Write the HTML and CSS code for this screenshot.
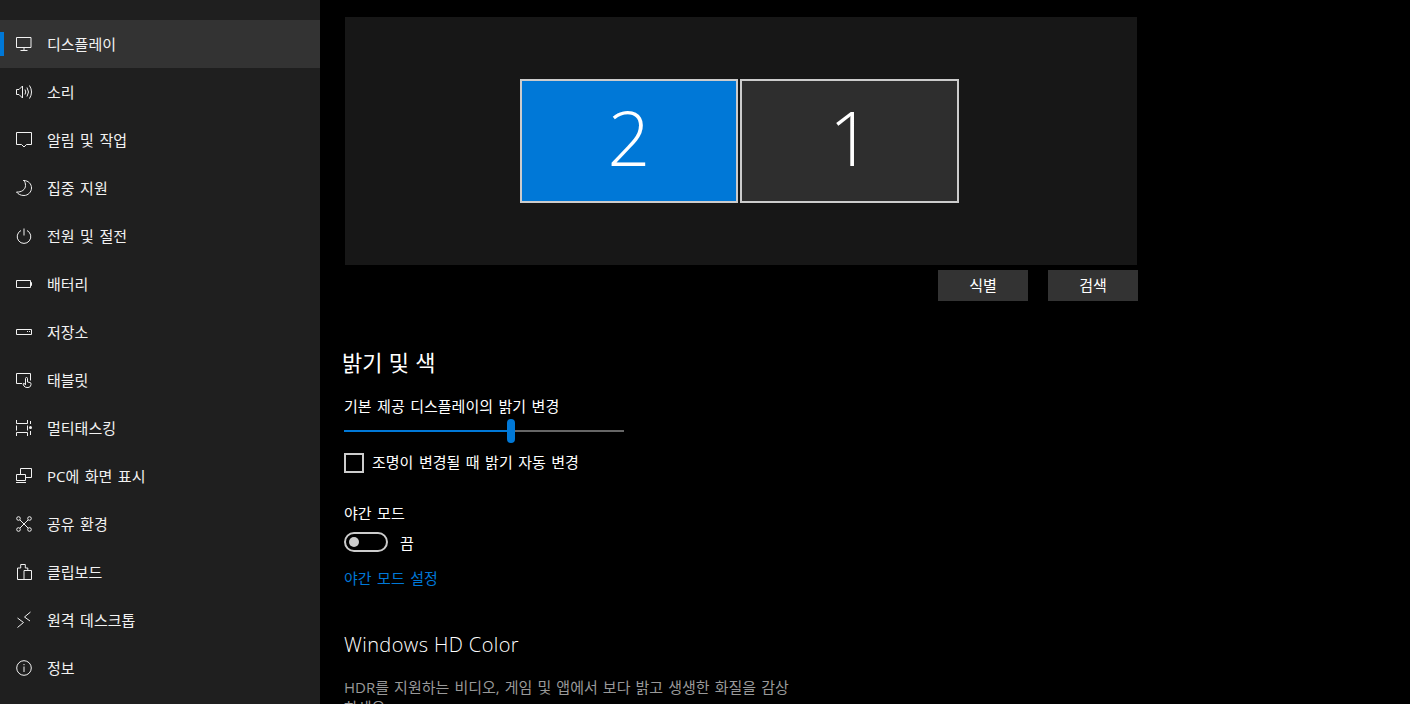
FILE: index.html
```html
<!DOCTYPE html>
<html lang="ko">
<head>
  <meta charset="UTF-8" />
  <title>디스플레이 설정</title>
  <link rel="stylesheet" href="styles.css">
</head>
<body>
  <nav class="sidebar">
    <a class="nav-item active">
      <svg class="nav-icon" viewBox="0 0 16 16"><path d="M.5 1.500h14.500v10H.5zM8 11.500v3M4.500 14.500h7"/></svg>
      <span>디스플레이</span>
    </a>
    <a class="nav-item">
      <svg class="nav-icon" viewBox="0 0 16 16"><path d="M.5 5.500h2.500L6.500 2v12L3 10.500H.5zM9 5.500q1.500 2.500 0 5M11 3.500q3 4.500 0 9M13.500 1.500q4 6.500 0 13"/></svg>
      <span>소리</span>
    </a>
    <a class="nav-item">
      <svg class="nav-icon" viewBox="0 0 16 16"><path d="M.5.500h15v12h-5L8 15l-2.500-2.500h-5z"/></svg>
      <span>알림 및 작업</span>
    </a>
    <a class="nav-item">
      <svg class="nav-icon" viewBox="0 0 16 16"><path d="M7.500.500C12.500.5 15.500 4 15.500 8c0 4-3.500 7.500-7.500 7.500-3.500 0-6-1.500-7.500-3.500 5 .5 9-2.500 9-6.500 0-2-.5-4-2-5.500z"/></svg>
      <span>집중 지원</span>
    </a>
    <a class="nav-item">
      <svg class="nav-icon" viewBox="0 0 16 16"><path d="M8 .5v7M5 2.500a6.800 6.800 0 1 0 6 0"/></svg>
      <span>전원 및 절전</span>
    </a>
    <a class="nav-item">
      <svg class="nav-icon" viewBox="0 0 16 16"><path d="M.5 4.500h14v7H.5zM14.500 6.500h1v3h-1"/></svg>
      <span>배터리</span>
    </a>
    <a class="nav-item">
      <svg class="nav-icon" viewBox="0 0 16 16"><path d="M.5 5.500h15v5H.5zM11 7.500h1M13 7.500h1"/></svg>
      <span>저장소</span>
    </a>
    <a class="nav-item">
      <svg class="nav-icon" viewBox="0 0 16 16"><path d="M6 11.500H.5v-10h14v7M9.500 13V6.500a1 1 0 0 1 2 0V10l2.500.5q1.500.5 1 2l-.5 1.500q-.5 1.500-2.500 1.500h-1q-2 0-3-1.500l-1-2q0-1 1.500-.5z"/></svg>
      <span>태블릿</span>
    </a>
    <a class="nav-item">
      <svg class="nav-icon" viewBox="0 0 16 16"><path d="M.5 0v3.500h11V0M.5 16v-3.500h11V16M.5 5.500v5M11.500 5.500v5M14.500 1v3M14.500 11v4"/><circle class="dot" cx="14.500" cy="7.500" r="1.500"/></svg>
      <span>멀티태스킹</span>
    </a>
    <a class="nav-item">
      <svg class="nav-icon" viewBox="0 0 16 16"><path d="M4.500 6V.5h11v9H10M.5 6.500h9v6h-9zM0 14.500h10"/></svg>
      <span>PC에 화면 표시</span>
    </a>
    <a class="nav-item">
      <svg class="nav-icon" viewBox="0 0 16 16"><circle cx="2.500" cy="2.500" r="1.800"/><circle cx="13.500" cy="2.500" r="1.800"/><circle cx="2.500" cy="13.500" r="1.800"/><circle cx="13.500" cy="13.500" r="1.800"/><path d="M4 4l8 8M12 4l-8 8"/></svg>
      <span>공유 환경</span>
    </a>
    <a class="nav-item">
      <svg class="nav-icon" viewBox="0 0 16 16"><path d="M8 15.500H1.500V4h3.200V.5h4.600V4h2.500v2.500M8 6.500h7.500v9H8z"/></svg>
      <span>클립보드</span>
    </a>
    <a class="nav-item">
      <svg class="nav-icon" viewBox="0 0 16 16"><path d="M1.500 6l6 4.500-6 5M14.500 0L8.500 5l5.500 4"/></svg>
      <span>원격 데스크톱</span>
    </a>
    <a class="nav-item">
      <svg class="nav-icon" viewBox="0 0 16 16"><circle cx="8" cy="8" r="7.300"/><path d="M8 6.500V12M8 4v1.200"/></svg>
      <span>정보</span>
    </a>
  </nav>

  <main class="content">
    <div class="arrange">
      <div class="monitor selected">2</div>
      <div class="monitor">1</div>
    </div>
    <div class="arrange-buttons">
      <button>식별</button>
      <button>검색</button>
    </div>

    <h2 class="section-title first">밝기 및 색</h2>
    <div class="field-label">기본 제공 디스플레이의 밝기 변경</div>
    <div class="slider">
      <div class="slider-fill"></div>
      <div class="slider-thumb"></div>
    </div>
    <label class="check-row">
      <span class="checkbox"></span>
      <span class="check-text">조명이 변경될 때 밝기 자동 변경</span>
    </label>

    <div class="night-label">야간 모드</div>
    <div class="toggle-row">
      <span class="toggle"><span class="toggle-knob"></span></span>
      <span>끔</span>
    </div>
    <a class="link">야간 모드 설정</a>

    <h2 class="section-title hd">Windows HD Color</h2>
    <p class="description">HDR를 지원하는 비디오, 게임 및 앱에서 보다 밝고 생생한 화질을 감상하세요.</p>
  </main>
</body>
</html>
```

FILE: styles.css
```css
* {
  box-sizing: border-box;
}

html, body {
  height: 704px;
  overflow: hidden;
}

body {
  margin: 0;
  background-color: #000;
  color: #fff;
  font-family: "Open Sans", "Noto Sans CJK KR", sans-serif;
  font-size: 15px;
  word-spacing: 1.6px;
  display: flex;
}

.sidebar {
  width: 320px;
  flex-shrink: 0;
  height: 704px;
  padding-top: 20px;
  background-color: #1f1f1f;
}

.nav-item {
  display: flex;
  align-items: center;
  height: 48px;
  padding-left: 16px;
  color: #f2f2f2;
  position: relative;
}

.nav-item span {
  margin-left: 15px;
  margin-top: -2px;
}

.nav-item.active {
  background-color: #333;
}

.nav-item.active::before {
  content: "";
  position: absolute;
  left: 0;
  top: 12px;
  width: 4px;
  height: 24px;
  background-color: #0078d7;
}

.nav-icon {
  width: 16px;
  height: 16px;
  fill: none;
  stroke: #f2f2f2;
  stroke-width: 1;
  overflow: visible;
}

.nav-icon .dot {
  fill: #f2f2f2;
  stroke: none;
}

.content {
  flex: 1;
  padding: 17px 0 0 24px;
}

.arrange {
  width: 792px;
  height: 248px;
  margin-left: 1px;
  padding: 62px 0 0 175px;
  background-color: #171717;
  display: flex;
  gap: 2px;
  align-items: flex-start;
}

.monitor {
  width: 219px;
  height: 124px;
  padding-left: 2px;
  border: 2px solid #ccc;
  background-color: #2e2e2e;
  text-align: center;
  font-family: "Open Sans", sans-serif;
  font-weight: 300;
  font-size: 75px;
  line-height: 112px;
}

.monitor.selected {
  width: 218px;
  padding-left: 0;
  background-color: #0078d7;
}

.arrange-buttons {
  width: 794px;
  margin-top: 5px;
  display: flex;
  justify-content: flex-end;
  gap: 20px;
}

button {
  width: 90px;
  height: 31px;
  padding: 0 0 2px;
  border: none;
  background-color: #333;
  color: #fff;
  font-family: inherit;
  font-size: 15px;
}

.section-title {
  margin: 0;
  font-weight: 400;
  font-size: 22px;
  line-height: 28px;
}

.section-title.first {
  margin-top: 47px;
  margin-left: -2px;
  word-spacing: .5px;
}

.field-label {
  margin-top: 20px;
  line-height: 20px;
}

.slider {
  position: relative;
  width: 280px;
  height: 2px;
  margin-top: 14px;
  background-color: #666;
}

.slider-fill {
  width: 167px;
  height: 2px;
  background-color: #0078d7;
}

.slider-thumb {
  position: absolute;
  left: 163px;
  top: -11px;
  width: 8px;
  height: 24px;
  border-radius: 4px;
  background-color: #0078d7;
}

.check-row {
  display: flex;
  align-items: center;
  gap: 8px;
  margin-top: 21px;
  height: 20px;
}

.check-text {
  margin-top: -4px;
}

.checkbox {
  width: 20px;
  height: 20px;
  border: 2px solid #ccc;
}

.night-label {
  margin-top: 30px;
  line-height: 20px;
}

.toggle-row {
  display: flex;
  align-items: center;
  gap: 12px;
  margin-top: 9px;
  height: 20px;
}

.toggle {
  display: flex;
  align-items: center;
  width: 44px;
  height: 20px;
  padding-left: 3px;
  border: 2px solid #ccc;
  border-radius: 10px;
}

.toggle-knob {
  width: 10px;
  height: 10px;
  border-radius: 50%;
  background-color: #ccc;
}

.link {
  display: block;
  margin-top: 16px;
  line-height: 20px;
  color: #0078d7;
}

.section-title.hd {
  margin-top: 43px;
  font-size: 20px;
  font-weight: 300;
  letter-spacing: .4px;
  word-spacing: 0;
}

.description {
  width: 456px;
  margin: 18px 0 0;
  line-height: 20px;
  word-spacing: 1.2px;
  color: #999;
}
```
